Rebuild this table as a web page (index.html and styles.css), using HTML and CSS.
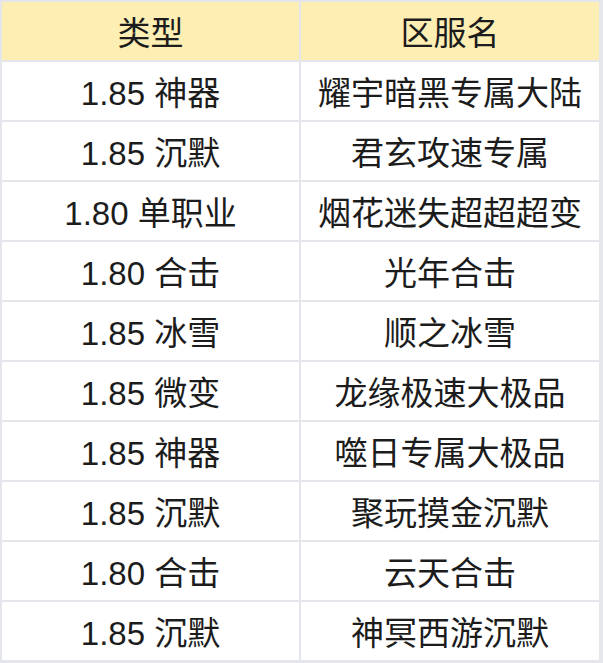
FILE: index.html
```html
<!DOCTYPE html>
<html lang="zh-CN">
<head>
<meta charset="utf-8">
<title>区服列表</title>
<link rel="stylesheet" href="styles.css">
</head>
<body>
<table class="servers">
  <thead>
    <tr><th>类型</th><th>区服名</th></tr>
  </thead>
  <tbody>
    <tr><td>1.85 神器</td><td>耀宇暗黑专属大陆</td></tr>
    <tr><td>1.85 沉默</td><td>君玄攻速专属</td></tr>
    <tr><td>1.80 单职业</td><td>烟花迷失超超超变</td></tr>
    <tr><td>1.80 合击</td><td>光年合击</td></tr>
    <tr><td>1.85 冰雪</td><td>顺之冰雪</td></tr>
    <tr><td>1.85 微变</td><td>龙缘极速大极品</td></tr>
    <tr><td>1.85 神器</td><td>噬日专属大极品</td></tr>
    <tr><td>1.85 沉默</td><td>聚玩摸金沉默</td></tr>
    <tr><td>1.80 合击</td><td>云天合击</td></tr>
    <tr><td>1.85 沉默</td><td>神冥西游沉默</td></tr>
  </tbody>
</table>
</body>
</html>
```
FILE: styles.css
```css
html, body {
  margin: 0;
  padding: 0;
  background: #e5e6eb;
}
.servers {
  border-collapse: separate;
  border-spacing: 2px;
  width: 601px;
  table-layout: fixed;
  font-family: "Liberation Sans", "Noto Sans CJK SC", sans-serif;
  font-size: 33px;
  color: #1c1c1c;
}
.servers th,
.servers td {
  height: 58px;
  padding: 0;
  text-align: center;
  vertical-align: middle;
  font-weight: normal;
  background: #ffffff;
  white-space: nowrap;
}
.servers th {
  background: #fdeeb3;
}
.servers th:first-child,
.servers td:first-child {
  width: 297px;
}
```
